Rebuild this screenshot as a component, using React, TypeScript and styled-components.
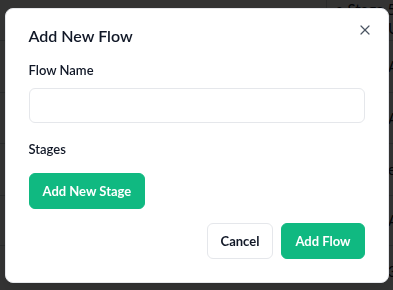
import styled, { createGlobalStyle } from 'styled-components';
import { X } from 'lucide-react';

const GlobalStyle = createGlobalStyle`
  * { box-sizing: border-box; }
  body {
    margin: 0;
    font-family: Lato, 'Noto Sans', sans-serif;
    background: #fff;
  }
`;

// page behind the dialog
const Page = styled.div`
  height: 290px;
  overflow: hidden;
  background: #fff;
  color: #111827;
  font-size: 15px;
`;

const Row = styled.div<{ $h: number }>`
  display: grid;
  grid-template-columns: 326px 54px 1fr;
  height: ${(p) => p.$h}px;
  border-bottom: 1px solid #d1d5db;
`;

const Cell = styled.div<{ $bottom?: boolean; $line?: boolean }>`
  display: flex;
  flex-direction: column;
  justify-content: ${(p) => (p.$bottom ? 'flex-end' : 'center')};
  padding: ${(p) => (p.$bottom ? '0 0 13px 8px' : '0 8px')};
  white-space: nowrap;
  line-height: 19px;
  border-left: ${(p) => (p.$line ? '1px solid #d1d5db' : 'none')};
`;

const Overlay = styled.div`
  position: fixed;
  inset: 0;
  background: rgba(0, 0, 0, 0.8);
  display: flex;
  align-items: center;
  justify-content: center;
`;

const Modal = styled.div`
  position: relative;
  width: 384px;
  background: #fff;
  border: 1px solid #e5e7eb;
  border-radius: 8px;
  padding: 15px 23px 23px;
  display: flex;
  flex-direction: column;
  box-shadow: 0 10px 15px -3px rgba(0, 0, 0, 0.1);
`;

const CloseButton = styled.button`
  position: absolute;
  top: 13px;
  right: 15px;
  width: 16px;
  height: 16px;
  padding: 0;
  border: none;
  background: none;
  color: #4b5563;
  display: flex;
  cursor: pointer;
`;

const Title = styled.h2`
  margin: 0 0 12px;
  font-size: 16px;
  line-height: 24px;
  font-weight: 600;
  color: #111827;
`;

const Label = styled.label`
  display: block;
  font-size: 13px;
  line-height: 20px;
  font-weight: 600;
  color: #111827;
`;

const Field = styled.div`
  display: flex;
  flex-direction: column;
  gap: 8px;
  margin-bottom: 16px;
`;

const Input = styled.input`
  height: 35px;
  width: 100%;
  border: 1px solid #e5e7eb;
  border-radius: 6px;
  padding: 0 12px;
  font: inherit;
  font-size: 13px;
  outline: none;
`;

const Section = styled.div`
  display: flex;
  flex-direction: column;
  align-items: flex-start;
  gap: 14px;
`;

const Button = styled.button<{ $variant?: 'primary' | 'outline' }>`
  height: 36px;
  padding: 0 13px;
  border-radius: 6px;
  font-family: inherit;
  font-size: 13px;
  font-weight: 700;
  cursor: pointer;
  border: 1px solid ${(p) => (p.$variant === 'outline' ? '#e5e7eb' : '#10b981')};
  background: ${(p) => (p.$variant === 'outline' ? '#fff' : '#10b981')};
  color: ${(p) => (p.$variant === 'outline' ? '#111827' : '#fff')};
`;

const Footer = styled.div`
  display: flex;
  justify-content: flex-end;
  gap: 8px;
  margin-top: 14px;
`;

export default function App() {
  return (
    <>
      <GlobalStyle />
      <Page>
        <Row $h={41}>
          <Cell />
          <Cell $bottom $line>
            <span>• Stage 5</span>
            <span>&nbsp;</span>
          </Cell>
          <Cell $bottom>
            <span>&nbsp;</span>
            <span>UI</span>
          </Cell>
        </Row>
        <Row $h={52}>
          <Cell />
          <Cell />
          <Cell>Admin</Cell>
        </Row>
        <Row $h={51}>
          <Cell />
          <Cell />
          <Cell>Admin</Cell>
        </Row>
        <Row $h={52}>
          <Cell />
          <Cell />
          <Cell>editor</Cell>
        </Row>
        <Row $h={50}>
          <Cell />
          <Cell />
          <Cell>Admin</Cell>
        </Row>
        <Row $h={52}>
          <Cell />
          <Cell />
          <Cell>3</Cell>
        </Row>
      </Page>
      <Overlay>
        <Modal role='dialog'>
          <Title>Add New Flow</Title>
          <Field>
            <Label htmlFor='flow-name'>Flow Name</Label>
            <Input id='flow-name' />
          </Field>
          <Section>
            <Label>Stages</Label>
            <Button>Add New Stage</Button>
          </Section>
          <Footer>
            <Button $variant='outline'>Cancel</Button>
            <Button>Add Flow</Button>
          </Footer>
          <CloseButton aria-label='Close'>
            <X size={16} strokeWidth={1.8} />
          </CloseButton>
        </Modal>
      </Overlay>
    </>
  );
}
